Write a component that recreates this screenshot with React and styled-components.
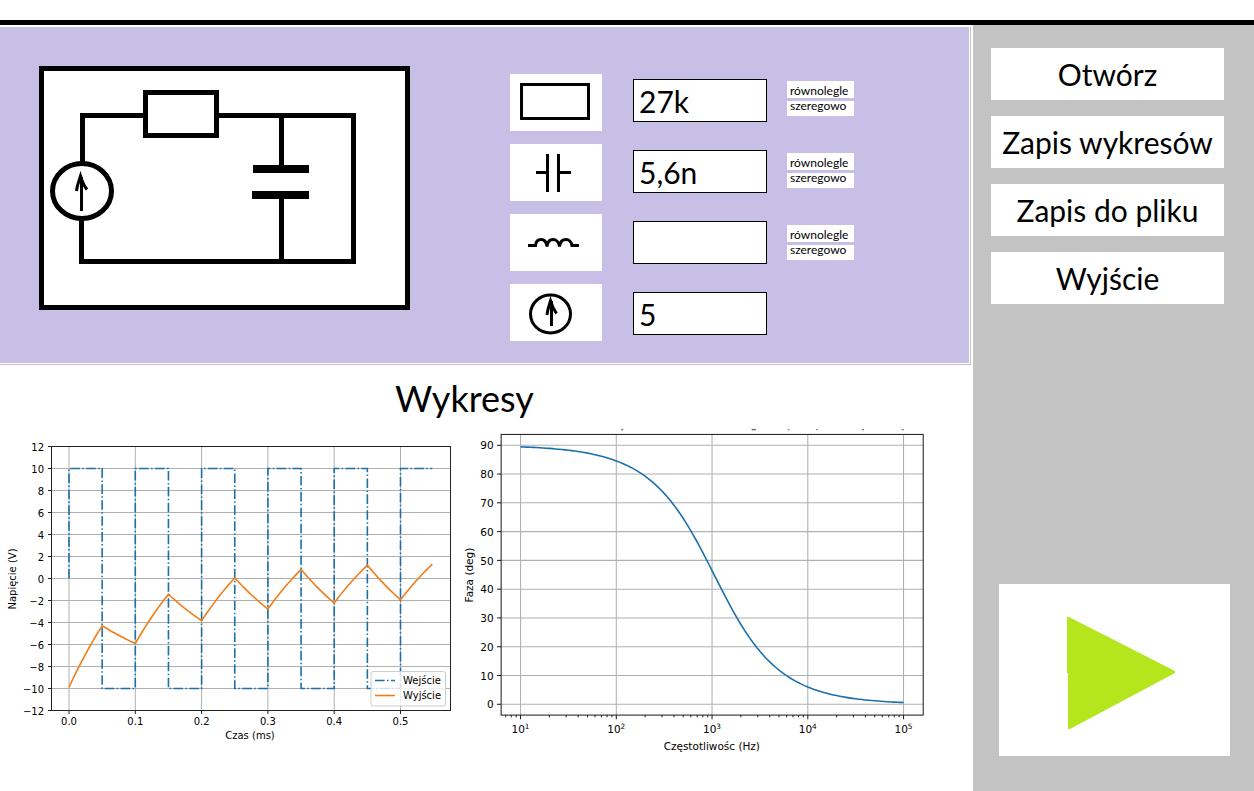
import React from 'react';
import styled, { createGlobalStyle } from 'styled-components';

const GlobalStyle = createGlobalStyle`
  *, *::before, *::after { box-sizing: border-box; }
  body {
    margin: 0;
    background: #fff;
    color: #000;
    font-family: Lato, "Open Sans", sans-serif;
  }
  button, input { font-family: inherit; color: inherit; border-radius: 0; }
`;

const Page = styled.div`
  min-height: 100vh;
  display: flex;
  flex-direction: column;
`;

const TopBar = styled.header`
  height: 25px;
  border-bottom: 5px solid #000;
`;

const Body = styled.div`
  flex: 1;
  display: grid;
  grid-template-columns: minmax(0, 1fr) 281px;
`;

const Main = styled.main`
  padding-top: 2px;
`;

const PanelEdge = styled.div`
  margin-right: 2px;
  padding: 0 1px 1px 0;
  border: solid #c3c3c3;
  border-width: 0 1px 1px 0;
`;

const CircuitPanel = styled.section`
  display: flex;
  align-items: flex-start;
  min-height: 336px;
  padding: 39px 39px 20px;
  background: #c8bfe6;
`;

const Schematic = styled.div`
  flex: 0 1 371px;
  margin-right: 100px;
  border: 5px solid #000;
  background: #fff;

  svg { display: block; width: 100%; height: auto; }
`;

const Column = styled.div`
  display: flex;
  flex-direction: column;
  gap: ${(p) => p.$gap}px;
  margin-top: ${(p) => p.$top}px;
  margin-right: ${(p) => p.$after || 0}px;
`;

const PartButton = styled.button`
  width: 92px;
  height: 57px;
  padding: 0;
  border: 0;
  background: #fff;

  svg { display: block; }
`;

const ValueInput = styled.input`
  width: 134px;
  height: 43px;
  padding: 0 5px;
  border: 1px solid #000;
  background: #fff;
  font-size: 30px;
`;

const ModeGroup = styled.div`
  display: flex;
  flex-direction: column;
  gap: 3px;
`;

const ModeButton = styled.button`
  width: 67px;
  height: 17px;
  padding: 2px 3px 0;
  border: 0;
  background: #fff;
  font-size: 12px;
  line-height: 15px;
  text-align: left;

  &:last-child {
    height: 15px;
    padding: 0 3px 5px;
    line-height: 10px;
  }
`;

const Sidebar = styled.aside`
  display: flex;
  flex-direction: column;
  gap: 16px;
  padding: 23px 30px 35px 18px;
  background: #c3c3c3;
`;

const MenuButton = styled.button`
  height: 52px;
  padding: 0;
  border: 0;
  background: #fff;
  font-size: 30px;
  line-height: 50px;
  white-space: nowrap;
`;

const PlayButton = styled.button`
  width: 231px;
  height: 172px;
  margin: auto 0 0 8px;
  padding: 0;
  border: 0;
  background: #fff;

  svg { display: block; }
`;

const ChartsSection = styled.section`
  padding: 11px 44px 20px 0;
`;

const ChartsTitle = styled.h1`
  margin: 0 0 5px;
  font-size: 36px;
  font-weight: 400;
  line-height: 44px;
  text-align: center;
`;

const Charts = styled.div`
  display: grid;
  grid-template-columns: 460fr 469fr;
  align-items: start;
`;

const Plot = styled.svg`
  display: block;
  width: 100%;
  height: auto;
  font-family: "DejaVu Sans", sans-serif;
  font-size: 10px;
`;

function SchematicDrawing() {
  return (
    <svg viewBox="44 71 361 234" role="img" aria-label="Schemat obwodu">
      <g fill="#000" shapeRendering="crispEdges">
        <rect x="80" y="113" width="5" height="50" />
        <rect x="80" y="113" width="65" height="5" />
        <rect x="217" y="113" width="139" height="5" />
        <rect x="351" y="114" width="5" height="150" />
        <rect x="79" y="259" width="277" height="5" />
        <rect x="79" y="219" width="5" height="45" />
        <rect x="279" y="116" width="5" height="50" />
        <rect x="253" y="165" width="56" height="8" />
        <rect x="252" y="191" width="57" height="8" />
        <rect x="279" y="198" width="5" height="62" />
      </g>
      <rect x="145.500" y="92.500" width="71" height="43" fill="none" stroke="#000" strokeWidth="5" />
      <ellipse cx="82" cy="191" rx="29.500" ry="27.500" fill="none" stroke="#000" strokeWidth="5" />
      <path d="M81.500 177V211M76.500 191C77 186 79 181 80.500 176C82 181 84 186 87 189.500" fill="none" stroke="#000" strokeWidth="3" />
    </svg>
  );
}

const partIcons = {
  resistor: <rect x="11.500" y="10.500" width="67" height="34" />,
  capacitor: <path d="M26 28.500H37M37.500 10V48M48.500 10V48M49 28.500H61" />,
  inductor: (
    <path d="M18 31.500H25.500C26 27 28 25.500 31 25.500C34 25.500 36.500 28 37 32.500C37.500 28 40 25.500 43 25.500C46 25.500 49 28 49.500 32.500C50 28 52.500 25.500 56 25.500C59 25.500 61.500 28 62 31.500H69" />
  ),
  source: (
    <>
      <ellipse cx="40.500" cy="30" rx="20" ry="19" />
      <path d="M41.500 17V42M37 31C37.500 26 39 22 40.500 17C42 22 44 26 46.500 29.500" />
    </>
  ),
};

function PartIcon({ kind }) {
  return (
    <svg width="92" height="57" viewBox="0 0 92 57" fill="none" stroke="#000" strokeWidth="3" aria-hidden="true">
      {partIcons[kind]}
    </svg>
  );
}

const parts = [
  { kind: 'resistor', name: 'Rezystor', value: '27k', modes: true },
  { kind: 'capacitor', name: 'Kondensator', value: '5,6n', modes: true },
  { kind: 'inductor', name: 'Cewka', value: '', modes: true },
  { kind: 'source', name: 'Źródło', value: '5', modes: false },
];

const GRID = '#b0b0b0';
const BLUE = '#1a70ab';
const ORANGE = '#f07d1a';
const DASH = '9.600 2.400 1.500 2.400';

const toPath = (points) => 'M' + points.map(([x, y]) => `${x.toFixed(2)} ${y.toFixed(2)}`).join('L');

const END_TIME = 0.548;
const TAU = 0.1512;

function inputWave() {
  const points = [[0, 0]];
  for (let i = 0; i < 11; i += 1) {
    const level = i % 2 ? -10 : 10;
    points.push([i * 0.05, level], [Math.min((i + 1) * 0.05, END_TIME), level]);
  }
  return points;
}

function outputWave() {
  const points = [[0, -9.9]];
  let start = -9.9;
  for (let i = 0; i < 11; i += 1) {
    const level = i % 2 ? -10 : 10;
    for (let k = 1; k <= 10; k += 1) {
      const t = Math.min(i * 0.05 + k * 0.005, END_TIME);
      const v = level + (start - level) * Math.exp(-(t - i * 0.05) / TAU);
      points.push([t, v]);
    }
    start = points[points.length - 1][1];
  }
  return points;
}

function VoltageChart() {
  const X = (t) => 69 + t * 663;
  const Y = (v) => 153.5 - v * 11;
  const xTicks = [0, 0.1, 0.2, 0.3, 0.4, 0.5];
  const yTicks = Array.from({ length: 13 }, (_, i) => 12 - i * 2);
  const map = (points) => toPath(points.map(([t, v]) => [X(t), Y(v)]));
  return (
    <Plot viewBox="0 0 460 335" role="img" aria-label="Napięcie w czasie">
      <g stroke={GRID}>
        {xTicks.map((t) => <line key={t} x1={X(t)} x2={X(t)} y1="21.500" y2="285.500" />)}
        {yTicks.map((v) => <line key={v} x1="51.500" x2="450.500" y1={Y(v)} y2={Y(v)} />)}
      </g>
      <path d={map(inputWave())} fill="none" stroke={BLUE} strokeWidth="1.600" strokeDasharray={DASH} />
      <path d={map(outputWave())} fill="none" stroke={ORANGE} strokeWidth="1.600" />
      <rect x="51.500" y="21.500" width="399" height="264" fill="none" stroke="#222" />
      <g stroke="#222">
        {xTicks.map((t) => <line key={t} x1={X(t)} x2={X(t)} y1="286" y2="289" />)}
        {yTicks.map((v) => <line key={v} x1="48" x2="51" y1={Y(v)} y2={Y(v)} />)}
      </g>
      {xTicks.map((t) => <text key={t} x={X(t)} y="300" textAnchor="middle">{t.toFixed(1)}</text>)}
      {yTicks.map((v) => (
        <text key={v} x="44" y={Y(v) + 4} textAnchor="end">{String(v).replace('-', '−')}</text>
      ))}
      <text x="250" y="314" textAnchor="middle">Czas (ms)</text>
      <text transform="translate(16 154) rotate(-90)" textAnchor="middle">Napięcie (V)</text>
      <rect x="371" y="246.500" width="74.500" height="34.500" rx="2" fill="#fff" fillOpacity=".8" stroke="#ccc" />
      <line x1="375" x2="395" y1="255.500" y2="255.500" stroke={BLUE} strokeWidth="1.600" strokeDasharray={DASH} />
      <line x1="375" x2="395" y1="270.500" y2="270.500" stroke={ORANGE} strokeWidth="1.600" />
      <text x="403" y="259">Wejście</text>
      <text x="403" y="274">Wyjście</text>
    </Plot>
  );
}

function PhaseChart() {
  const left = 39.2;
  const right = 441.5;
  const top = 9;
  const bottom = 276.5;
  const X = (e) => 57.7 + (e - 1) * 91.26;
  const Y = (deg) => 266.2 - deg * 2.743;
  const decades = [1, 2, 3, 4, 5];
  const yTicks = [0, 10, 20, 30, 40, 50, 60, 70, 80, 90];
  const cutoff = 1052.6;
  const curve = Array.from({ length: 121 }, (_, i) => {
    const e = 1 + i / 30;
    return [X(e), Y((Math.atan(cutoff / 10 ** e) * 180) / Math.PI)];
  });
  const minor = [];
  for (let d = 0; d < 6; d += 1) {
    for (let m = 2; m < 10; m += 1) {
      const x = X(d + Math.log10(m));
      if (x > left && x < right) minor.push(x);
    }
  }
  return (
    <Plot viewBox="0 0 447 320" role="img" aria-label="Faza w funkcji częstotliwości">
      <path
        d="M153.500 4.500h2M278 4q2 1 4 0M312.500 4.500h1.500M339.500 4.500h1.500M383 4.500h2M421 4.500h2"
        fill="none"
        stroke="#555"
      />
      <g stroke={GRID}>
        {decades.map((e) => <line key={e} x1={X(e)} x2={X(e)} y1={top} y2={bottom} />)}
        {yTicks.map((v) => <line key={v} x1={left} x2={right} y1={Y(v)} y2={Y(v)} />)}
      </g>
      <path d={toPath(curve)} fill="none" stroke={BLUE} strokeWidth="1.500" />
      <rect x={left} y={top} width={right - left} height={bottom - top} fill="none" stroke="#222" />
      <g stroke="#222">
        {decades.map((e) => <line key={e} x1={X(e)} x2={X(e)} y1={bottom} y2={bottom + 4} />)}
        {yTicks.map((v) => <line key={v} x1={left - 4} x2={left} y1={Y(v)} y2={Y(v)} />)}
        {minor.map((x) => <line key={x} x1={x} x2={x} y1={bottom} y2={bottom + 2} />)}
      </g>
      {decades.map((e) => (
        <text key={e} x={X(e)} y="294" textAnchor="middle">
          10<tspan dy="-4" fontSize="7">{e}</tspan>
        </text>
      ))}
      {yTicks.map((v) => <text key={v} x="32" y={Y(v) + 4} textAnchor="end">{v}</text>)}
      <text x="240" y="310" textAnchor="middle">Częstotliwośc (Hz)</text>
      <text transform="translate(12 143) rotate(-90)" textAnchor="middle">Faza (deg)</text>
    </Plot>
  );
}

export default function App() {
  return (
    <Page>
      <GlobalStyle />
      <TopBar />
      <Body>
        <Main>
          <PanelEdge>
            <CircuitPanel>
              <Schematic>
                <SchematicDrawing />
              </Schematic>
              <Column $top={8} $gap={13} $after={31}>
                {parts.map((p) => (
                  <PartButton key={p.kind} type="button" aria-label={p.name}>
                    <PartIcon kind={p.kind} />
                  </PartButton>
                ))}
              </Column>
              <Column $top={13} $gap={28} $after={20}>
                {parts.map((p) => (
                  <ValueInput key={p.kind} type="text" aria-label={`${p.name} – wartość`} defaultValue={p.value} />
                ))}
              </Column>
              <Column $top={15} $gap={37}>
                {parts.filter((p) => p.modes).map((p) => (
                  <ModeGroup key={p.kind} role="group" aria-label={p.name}>
                    <ModeButton type="button">równolegle</ModeButton>
                    <ModeButton type="button">szeregowo</ModeButton>
                  </ModeGroup>
                ))}
              </Column>
            </CircuitPanel>
          </PanelEdge>
          <ChartsSection>
            <ChartsTitle>Wykresy</ChartsTitle>
            <Charts>
              <VoltageChart />
              <PhaseChart />
            </Charts>
          </ChartsSection>
        </Main>
        <Sidebar>
          <MenuButton type="button">Otwórz</MenuButton>
          <MenuButton type="button">Zapis wykresów</MenuButton>
          <MenuButton type="button">Zapis do pliku</MenuButton>
          <MenuButton type="button">Wyjście</MenuButton>
          <PlayButton type="button" aria-label="Start">
            <svg width="231" height="172" viewBox="0 0 231 172" aria-hidden="true">
              <path d="M68 33H70L176 87V89L71 145H69V89H68Z" fill="#b5e61d" />
            </svg>
          </PlayButton>
        </Sidebar>
      </Body>
    </Page>
  );
}
